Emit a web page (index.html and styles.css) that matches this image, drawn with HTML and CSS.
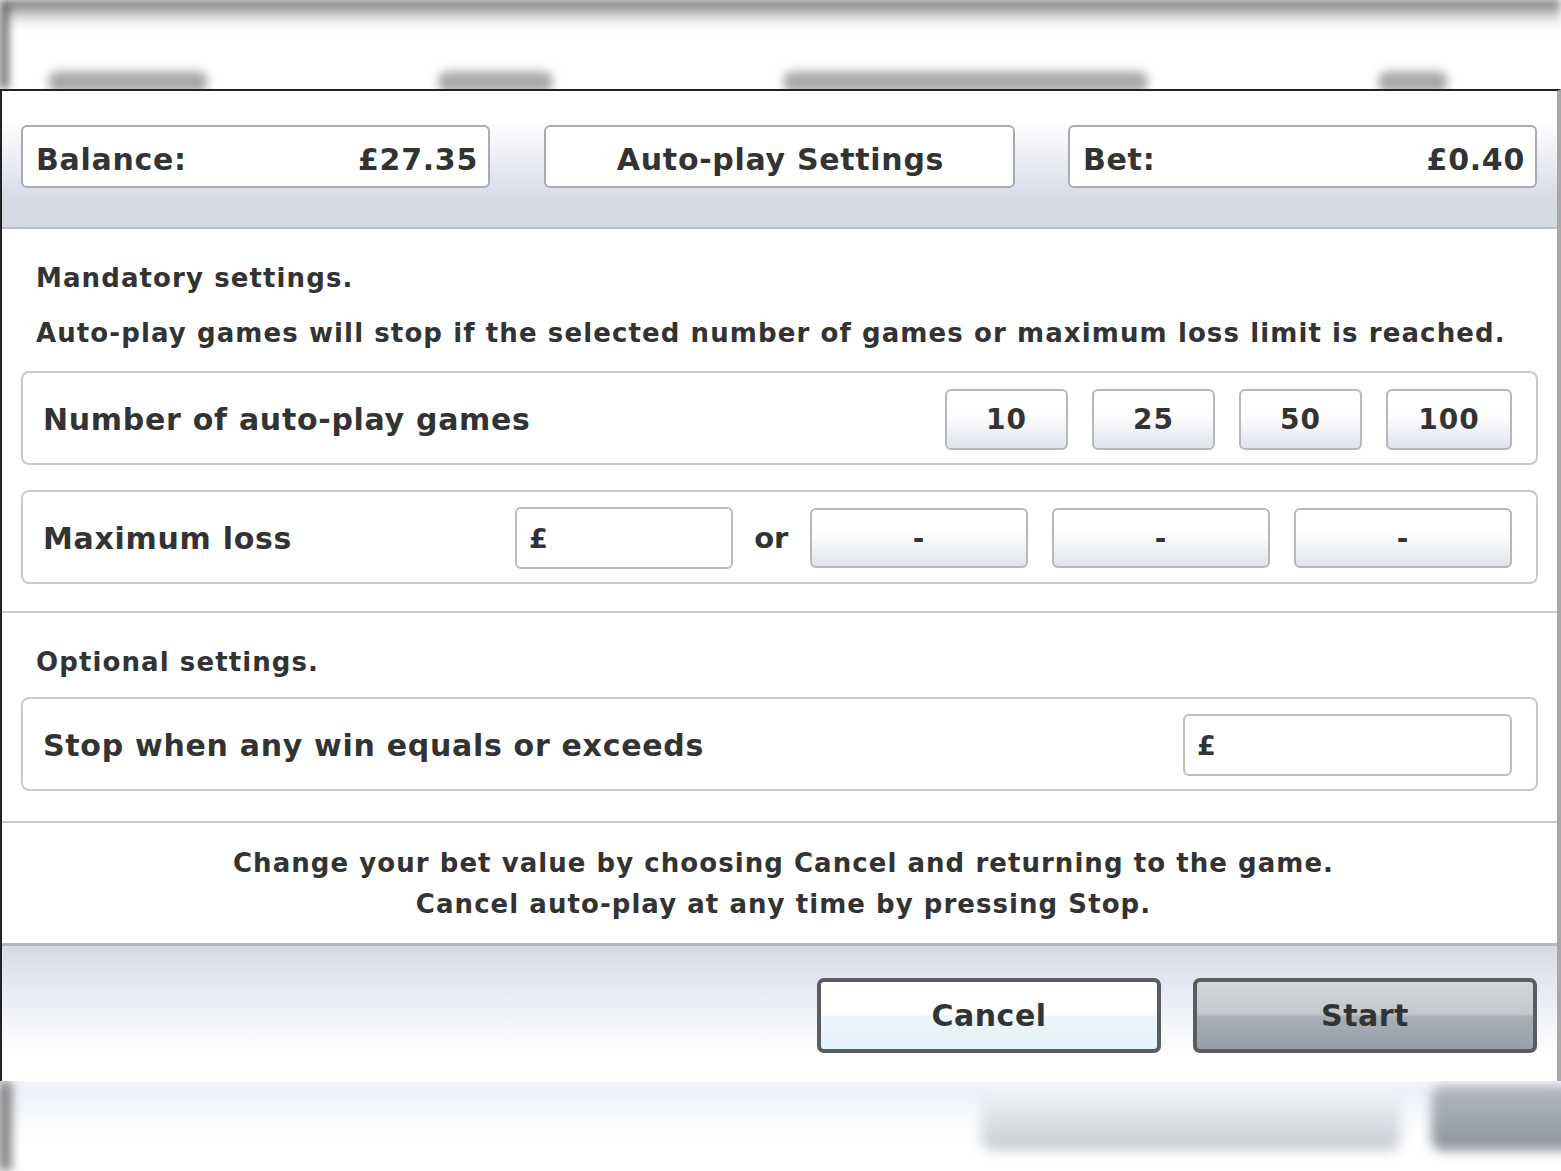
FILE: index.html
```html
<!DOCTYPE html>
<html>
    <head>
        <meta charset="UTF-8">
        <meta name="viewport" content="width=device-width, initial-scale=1.0">
        <link rel="stylesheet" href="styles.css">
        <title>Auto-play Settings</title>
    </head>
    <body>

        <!-- game screen behind the dialog, blurred -->
        <div id="backdrop">
            <div class="backtop">
                <div class="blob" style="width: 160px"></div>
                <div class="blob" style="width: 115px"></div>
                <div class="blob" style="width: 365px"></div>
                <div class="blob" style="width: 70px"></div>
            </div>
            <div class="backbottom">
                <div class="backbtn light"></div>
                <div class="backbtn dark"></div>
            </div>
        </div>

        <div id="dialog">
            <div class="header">
                <div class="infobox"><span>Balance:</span><span>£27.35</span></div>
                <div class="infobox title">Auto-play Settings</div>
                <div class="infobox"><span>Bet:</span><span>£0.40</span></div>
            </div>

            <div class="section">
                <div class="heading">Mandatory settings.</div>
                <div class="heading">Auto-play games will stop if the selected number of games or maximum loss limit is reached.</div>

                <div class="row">
                    <div class="label">Number of auto-play games</div>
                    <div class="choices games">
                        <div class="choice">10</div>
                        <div class="choice">25</div>
                        <div class="choice">50</div>
                        <div class="choice">100</div>
                    </div>
                </div>

                <div class="row">
                    <div class="label loss">Maximum loss</div>
                    <div class="field lossfield">£</div>
                    <div class="or">or</div>
                    <div class="choices losses">
                        <div class="choice">-</div>
                        <div class="choice">-</div>
                        <div class="choice">-</div>
                    </div>
                </div>
            </div>

            <div class="section optional">
                <div class="heading">Optional settings.</div>
                <div class="row">
                    <div class="label">Stop when any win equals or exceeds</div>
                    <div class="field winfield">£</div>
                </div>
            </div>

            <div class="notes">
                <div>Change your bet value by choosing Cancel and returning to the game.</div>
                <div>Cancel auto-play at any time by pressing Stop.</div>
            </div>

            <div class="footer">
                <div class="bigbtn cancel">Cancel</div>
                <div class="bigbtn start">Start</div>
            </div>
        </div>

    </body>
</html>
```

FILE: styles.css
```css
body {
    margin: 0;
    padding: 0;
    width: 1561px;
    height: 1171px;
    overflow: hidden;
    position: relative;
    background: #fff;
    font-family: "DejaVu Sans", "Liberation Sans", sans-serif;
    font-weight: bold;
    color: #333;
}

#backdrop {
    width: 100%;
    height: 100%;
    display: flex;
    flex-direction: column;
    justify-content: space-between;
}

.backtop {
    height: 89px;
    box-sizing: border-box;
    background: linear-gradient(#4a4a4a 0px, #bbb 10px, #fff 26px, #fff 100%);
    border-left: 8px solid #555;
    display: flex;
    align-items: flex-end;
    gap: 230px;
    padding: 0 0 0 40px;
    filter: blur(5px);
}

.blob {
    height: 22px;
    background: #aaa;
    border-radius: 10px;
    margin-bottom: -4px;
}

.backbottom {
    height: 90px;
    box-sizing: border-box;
    background: linear-gradient(#e9edf6, #fff 60%);
    border-left: 10px solid #555;
    display: flex;
    justify-content: flex-end;
    gap: 30px;
    filter: blur(6px);
}

.backbtn {
    height: 66px;
    margin-top: 4px;
    border-radius: 12px;
}
.backbtn.light {
    width: 420px;
    background: linear-gradient(#f2f8fc, #c9ccd2);
}
.backbtn.dark {
    width: 150px;
    margin-right: -20px;
    background: linear-gradient(#b4b9c0, #8e949c);
}

#dialog {
    position: absolute;
    top: 89px;
    left: 0;
    width: 1561px;
    height: 992px;
    box-sizing: border-box;
    background: #fff;
    border-top: 2px solid #222;
    border-left: 2px solid #222;
    border-right: 4px solid #a8a8a8;
    display: flex;
    flex-direction: column;
}

.header {
    height: 138px;
    box-sizing: border-box;
    padding: 34px 20px 0 19px;
    background: linear-gradient(#fff 0%, #fff 22%, #d5d9e6 82%, #d5d9e6 100%);
    border-bottom: 2px solid #b9bdc6;
    display: grid;
    grid-template-columns: 469px 471px 469px;
    justify-content: space-between;
    align-items: start;
}

.infobox {
    height: 63px;
    box-sizing: border-box;
    background: #fff;
    border: 2px solid #a9abb0;
    border-radius: 6px;
    display: flex;
    justify-content: space-between;
    align-items: center;
    padding: 5px 10px 0 13px;
    font-size: 30px;
    letter-spacing: 0.7px;
}
.infobox.title {
    justify-content: center;
}

.section {
    height: 384px;
    box-sizing: border-box;
    padding: 32px 19px 0 19px;
    border-bottom: 2px solid #cbcbcb;
}
.section.optional {
    height: 210px;
    padding-top: 32px;
}

.heading {
    font-size: 26px;
    height: 55px;
    line-height: 34px;
    padding-left: 15px;
    letter-spacing: 1.1px;
}

.row {
    height: 94px;
    box-sizing: border-box;
    border: 2px solid #c9c9c9;
    border-radius: 8px;
    margin-bottom: 25px;
    display: flex;
    align-items: center;
    padding: 2px 24px 0 20px;
}
.section.optional .heading + .row {
    margin-top: -3px;
}

.label {
    font-size: 30px;
    flex: 1;
    letter-spacing: 0.7px;
}
.label.loss {
    flex: 0 0 472px;
}

.choices {
    display: flex;
    gap: 24px;
}

.choice {
    height: 61px;
    box-sizing: border-box;
    border: 2px solid #b5b7bb;
    border-radius: 6px;
    background: linear-gradient(#fff 0%, #fff 40%, #dfe3ea 100%);
    display: flex;
    justify-content: center;
    align-items: center;
    font-size: 28px;
    letter-spacing: 1px;
}
.games .choice {
    width: 123px;
}
.games .choice:last-child {
    width: 126px;
}
.losses {
    gap: 24px;
}
.losses .choice {
    width: 218px;
    height: 60px;
}

.field {
    height: 62px;
    box-sizing: border-box;
    border: 2px solid #bdbdbd;
    border-radius: 6px;
    background: #fff;
    display: flex;
    align-items: center;
    padding-left: 12px;
    font-size: 27px;
}
.lossfield {
    width: 219px;
}
.winfield {
    width: 329px;
}

.or {
    font-size: 29px;
    width: 78px;
    text-align: center;
}

.notes {
    height: 120px;
    box-sizing: border-box;
    padding-top: 20px;
    text-align: center;
    font-size: 26px;
    line-height: 41px;
    padding-left: 8px;
    letter-spacing: 1.05px;
}

.footer {
    flex: 1;
    box-sizing: border-box;
    border-top: 3px solid #b4b7bc;
    background: linear-gradient(#d8dbe6 0%, #e6e9f3 30%, #fff 80%);
    display: flex;
    justify-content: flex-end;
    align-items: flex-start;
    gap: 32px;
    padding: 32px 20px 0 0;
}

.bigbtn {
    width: 344px;
    height: 75px;
    box-sizing: border-box;
    border: 4px solid #5a5c60;
    border-radius: 7px;
    display: flex;
    justify-content: center;
    align-items: center;
    font-size: 30px;
    letter-spacing: 0.5px;
    color: #333;
}
.bigbtn.cancel {
    background: linear-gradient(#fff 0%, #fff 48%, #eaf6fb 52%, #e4f2f9 100%);
}
.bigbtn.start {
    background: linear-gradient(#d5d8da 0%, #c3c7ca 48%, #a7adb3 52%, #9aa0a8 100%);
}
```
